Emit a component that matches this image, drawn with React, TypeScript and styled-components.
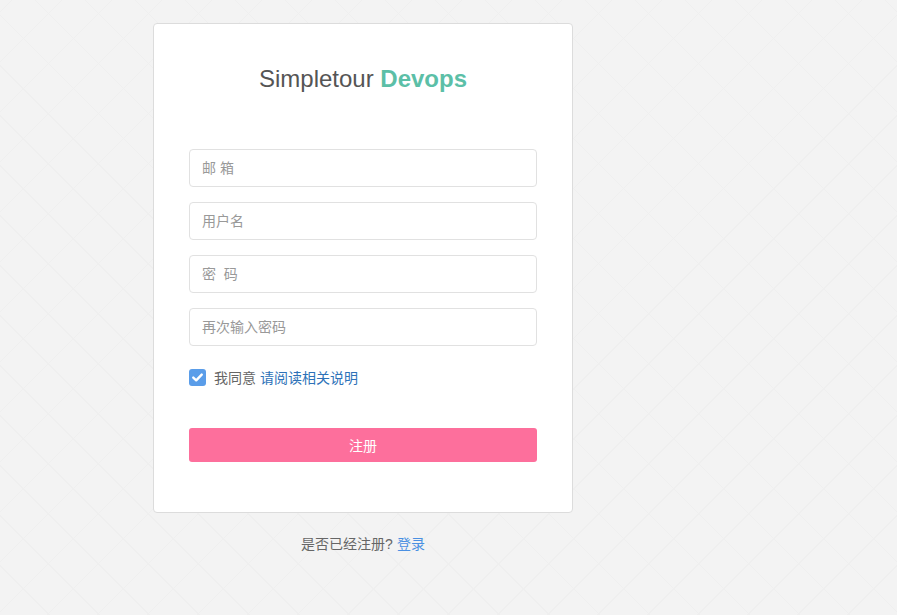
import React, { useState } from 'react';
import styled, { createGlobalStyle } from 'styled-components';

const GlobalStyle = createGlobalStyle`
    html, body {
        margin: 0;
        padding: 0;
        min-height: 100%;
    }
    body {
        min-height: 615px;
        font-family: "Liberation Sans", "Noto Sans CJK SC", Arial, sans-serif;
        font-size: 14px;
        color: #666;
        background-color: #f3f3f3;
        background-image:
            repeating-linear-gradient(45deg, transparent 0, transparent 34.6px, #efefef 34.6px, #efefef 35.36px),
            repeating-linear-gradient(-45deg, transparent 0, transparent 34.6px, #efefef 34.6px, #efefef 35.36px);
    }
`;

const Page = styled.div`
    padding: 23px 0 0 153px;
    display: flex;
    flex-direction: column;
    align-items: flex-start;
`;

const Column = styled.div`
    width: 420px;
    display: flex;
    flex-direction: column;
    align-items: stretch;
`;

const Card = styled.div`
    background: #fff;
    border: 1px solid #dcdcdc;
    border-radius: 4px;
    padding: 40px 35px 50px;
    display: flex;
    flex-direction: column;
`;

const Title = styled.h1`
    margin: 0 0 55px;
    font-family: "Liberation Sans", Arial, sans-serif;
    font-weight: normal;
    font-size: 24px;
    line-height: 30px;
    text-align: center;
    color: #555;
`;

const Accent = styled.span`
    color: #5cbfa7;
    font-weight: bold;
`;

const Form = styled.form`
    display: flex;
    flex-direction: column;
    gap: 15px;
`;

const Input = styled.input`
    box-sizing: border-box;
    width: 100%;
    height: 38px;
    padding: 0 12px;
    border: 1px solid #e1e1e1;
    border-radius: 4px;
    font-family: "Liberation Sans", "Noto Sans CJK SC", sans-serif;
    font-size: 14px;
    color: #555;
    outline: none;

    &::placeholder {
        color: #999;
    }
`;

const AgreeRow = styled.label`
    display: flex;
    align-items: center;
    height: 20px;
    margin-top: 6px;
    color: #666;
    cursor: pointer;
`;

const Box = styled.span<{ $checked: boolean }>`
    width: 17px;
    height: 17px;
    border-radius: 3px;
    background: ${(p) => (p.$checked ? '#5a9de9' : '#fff')};
    border: ${(p) => (p.$checked ? 'none' : '1px solid #ccc')};
    display: flex;
    align-items: center;
    justify-content: center;
    margin-right: 8px;
    flex-shrink: 0;
`;

const Link = styled.a<{ $light?: boolean }>`
    color: ${(p) => (p.$light ? '#4a90e2' : '#2d72b8')};
    text-decoration: none;
    margin-left: 4px;
`;

const Submit = styled.button`
    margin-top: 26px;
    height: 34px;
    border: none;
    border-radius: 3px;
    background: #fd6f9c;
    color: #fff;
    font-family: "Liberation Sans", "Noto Sans CJK SC", sans-serif;
    font-size: 14px;
    cursor: pointer;
`;

const Footer = styled.p`
    margin: 21px 0 0;
    line-height: 20px;
    text-align: center;
    color: #666;
`;

const App: React.FC = () => {
    const [agree, setAgree] = useState(true);

    return (
        <>
            <GlobalStyle />
            <Page>
                <Column>
                    <Card>
                        <Title>
                            Simpletour <Accent>Devops</Accent>
                        </Title>
                        <Form onSubmit={(e) => e.preventDefault()}>
                            <Input type="email" placeholder="邮 箱" />
                            <Input type="text" placeholder="用户名" />
                            <Input type="password" placeholder="密  码" />
                            <Input type="password" placeholder="再次输入密码" />
                            <AgreeRow onClick={() => setAgree(!agree)}>
                                <Box $checked={agree}>
                                    {agree && (
                                        <svg width="11" height="9" viewBox="0 0 11 9">
                                            <path d="M1.3 4.6 L4.2 7.3 L9.7 1.6" fill="none" stroke="#fff" strokeWidth="2.4" strokeLinecap="round" strokeLinejoin="round" />
                                        </svg>
                                    )}
                                </Box>
                                我同意
                                <Link href="#">请阅读相关说明</Link>
                            </AgreeRow>
                            <Submit type="submit">注册</Submit>
                        </Form>
                    </Card>
                    <Footer>
                        是否已经注册?
                        <Link href="#" $light>登录</Link>
                    </Footer>
                </Column>
            </Page>
        </>
    );
};

export default App;
